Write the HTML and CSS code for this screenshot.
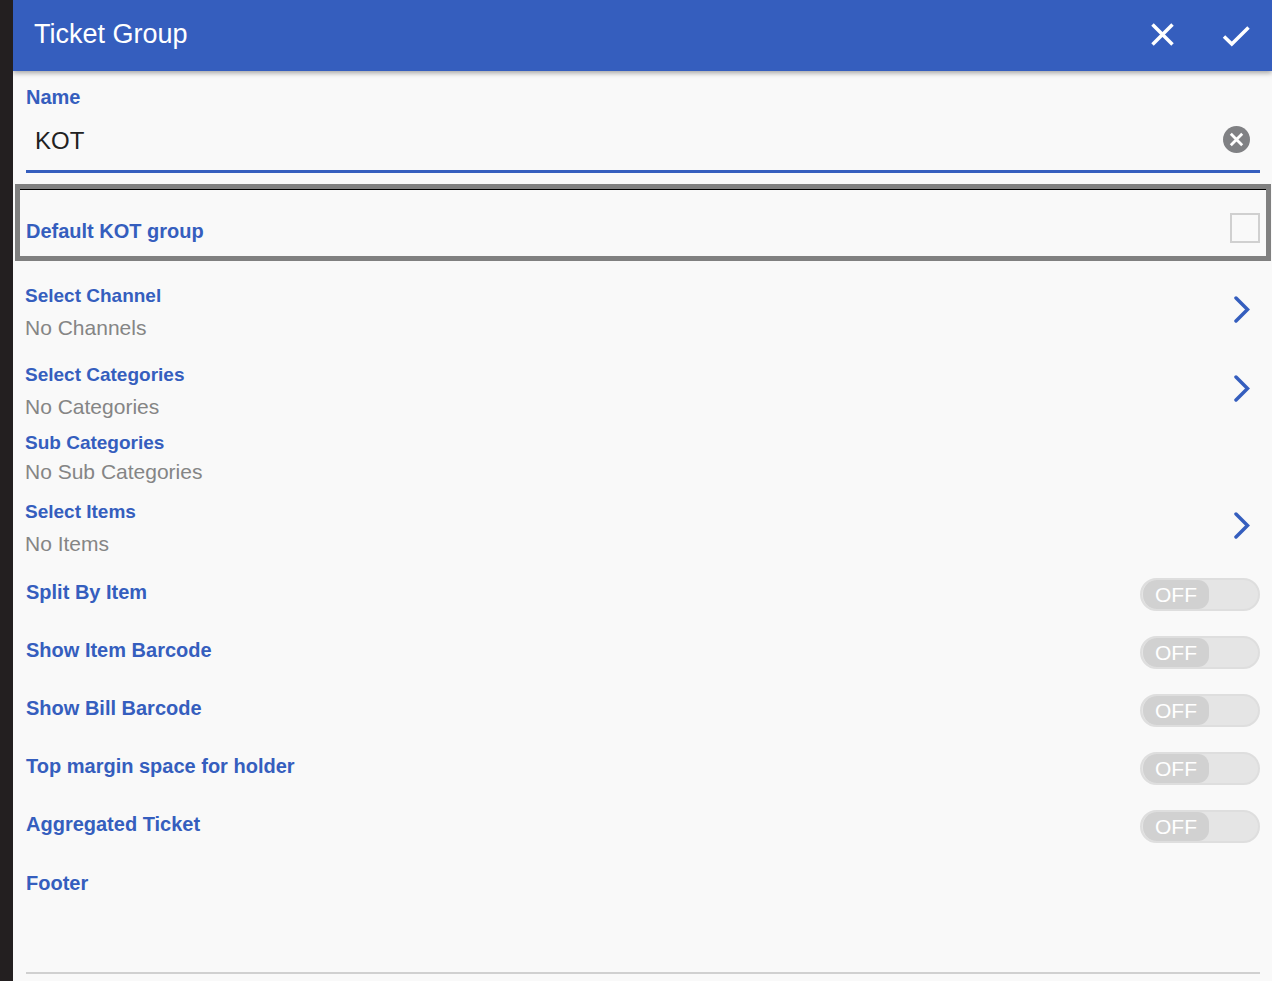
FILE: index.html
```html
<!DOCTYPE html>
<html lang="en">
<head>
    <meta charset="UTF-8">
    <meta name="viewport" content="width=device-width, initial-scale=1.0">
    <title>Ticket Group</title>
    <link rel="stylesheet" href="styles.css">
</head>
<body>

    <!-- Header -->
    <header class="header">
        <h1 class="title">Ticket Group</h1>
        <button class="icon-btn" type="button" aria-label="Close">
            <svg width="28" height="28" viewBox="0 0 28 28"><path d="M4.5 4.5L24.5 24.5M24.5 4.5L4.5 24.5" /></svg>
        </button>
        <button class="icon-btn" type="submit" form="ticket-form" aria-label="Save">
            <svg width="28" height="28" viewBox="0 0 28 28"><path d="M2 16.5L9.8 24L26.5 7.5" /></svg>
        </button>
    </header>

    <form id="ticket-form" class="form">
        <!-- Name -->
        <div class="field">
            <label class="label" for="name">Name</label>
            <div class="input-line">
                <input type="text" id="name" class="text-input" value="KOT">
                <button class="clear-btn" type="button" aria-label="Clear name">
                    <svg width="27" height="27" viewBox="0 0 27 27">
                        <circle cx="13.5" cy="13.5" r="13.5" />
                        <path d="M7.8 7.8L19.2 19.2M19.2 7.8L7.8 19.2" />
                    </svg>
                </button>
            </div>
        </div>

        <!-- Default group -->
        <div class="default-box">
            <label class="label" for="default-group">Default KOT group</label>
            <input type="checkbox" id="default-group" class="checkbox">
        </div>

        <!-- Pickers -->
        <div class="pickers">
            <button class="picker" type="button">
                <span class="picker-text">
                    <span class="picker-label">Select Channel</span>
                    <span class="picker-value">No Channels</span>
                </span>
                <svg class="chevron" width="16" height="27" viewBox="0 0 16 27"><path d="M2 2L13.5 13.5L2 25" /></svg>
            </button>
            <div class="category-group">
                <button class="picker" type="button">
                    <span class="picker-text">
                        <span class="picker-label">Select Categories</span>
                        <span class="picker-value">No Categories</span>
                    </span>
                    <svg class="chevron" width="16" height="27" viewBox="0 0 16 27"><path d="M2 2L13.5 13.5L2 25" /></svg>
                </button>
                <div class="picker-text sub-categories">
                    <span class="picker-label">Sub Categories</span>
                    <span class="picker-value">No Sub Categories</span>
                </div>
            </div>
            <button class="picker" type="button">
                <span class="picker-text">
                    <span class="picker-label">Select Items</span>
                    <span class="picker-value">No Items</span>
                </span>
                <svg class="chevron" width="16" height="27" viewBox="0 0 16 27"><path d="M2 2L13.5 13.5L2 25" /></svg>
            </button>
        </div>

        <!-- Switches -->
        <div class="switches">
            <div class="switch-row">
                <label class="label" for="split-item">Split By Item</label>
                <span class="switch"><input type="checkbox" id="split-item"><span class="thumb">OFF</span></span>
            </div>
            <div class="switch-row">
                <label class="label" for="item-barcode">Show Item Barcode</label>
                <span class="switch"><input type="checkbox" id="item-barcode"><span class="thumb">OFF</span></span>
            </div>
            <div class="switch-row">
                <label class="label" for="bill-barcode">Show Bill Barcode</label>
                <span class="switch"><input type="checkbox" id="bill-barcode"><span class="thumb">OFF</span></span>
            </div>
            <div class="switch-row">
                <label class="label" for="top-margin">Top margin space for holder</label>
                <span class="switch"><input type="checkbox" id="top-margin"><span class="thumb">OFF</span></span>
            </div>
            <div class="switch-row">
                <label class="label" for="aggregated">Aggregated Ticket</label>
                <span class="switch"><input type="checkbox" id="aggregated"><span class="thumb">OFF</span></span>
            </div>
        </div>

        <!-- Footer text -->
        <div class="footer-field">
            <label class="label" for="footer">Footer</label>
            <textarea id="footer" class="footer-input"></textarea>
        </div>
    </form>

    <script>
        // Clear the name field
        document.querySelector('.clear-btn').addEventListener('click', function () {
            const name = document.getElementById('name');
            name.value = '';
            name.focus();
        });

        // Keep the switch text in step with its state
        document.querySelectorAll('.switch input').forEach(function (input) {
            input.addEventListener('change', function () {
                input.nextElementSibling.innerText = input.checked ? 'ON' : 'OFF';
            });
        });
    </script>

</body>
</html>
```
FILE: styles.css
```css
* {
    box-sizing: border-box;
}

body {
    margin: 0;
    min-height: 100vh;
    border-left: 13px solid #231f20;
    background-color: #f9f9f9;
    font-family: "Liberation Sans", Arial, Helvetica, sans-serif;
    color: #222;
}

button, input, textarea {
    font-family: inherit;
    margin: 0;
}

button {
    padding: 0;
    border: none;
    background: none;
    cursor: pointer;
}

svg {
    display: block;
    fill: none;
}

/* Header */
.header {
    display: flex;
    align-items: center;
    gap: 46px;
    height: 71px;
    padding: 0 22px 3px 21px;
    background-color: #355ebe;
    box-shadow: 0 2px 5px rgba(0, 0, 0, 0.35);
    color: white;
}

.title {
    flex: 1;
    margin: 0;
    font-size: 27px;
    font-weight: normal;
    line-height: 32px;
}

.icon-btn svg {
    stroke: white;
    stroke-width: 3.5;
}

/* Name */
.form {
    padding: 14px 0 7px;
}

.field {
    padding: 0 12px 0 13px;
}

.label {
    display: block;
    font-size: 20px;
    font-weight: bold;
    line-height: 24px;
    color: #355ebe;
}

.input-line {
    display: flex;
    align-items: center;
    height: 64px;
    padding-right: 10px;
    border-bottom: 3px solid #355ebe;
}

.text-input {
    flex: 1;
    min-width: 0;
    height: 60px;
    padding: 2px 9px 0;
    border: none;
    outline: none;
    background: none;
    font-size: 24px;
    color: #222;
}

.clear-btn circle {
    fill: #808184;
}

.clear-btn path {
    stroke: white;
    stroke-width: 2.8;
}

/* Default group */
.default-box {
    display: flex;
    justify-content: space-between;
    align-items: flex-end;
    height: 77px;
    margin: 11px 1px 22px 2px;
    padding: 0 6px 13px;
    border: 5px solid #808080;
    box-shadow: inset 0 1px 0 #000;
}

.checkbox {
    appearance: none;
    width: 30px;
    height: 30px;
    border: 2px solid #d0d0d0;
    cursor: pointer;
}

.checkbox:checked {
    background-color: #355ebe;
}

/* Pickers */
.pickers {
    display: flex;
    flex-direction: column;
    gap: 22px;
    padding: 0 22px 0 12px;
}

.picker {
    display: flex;
    justify-content: space-between;
    align-items: flex-start;
    width: 100%;
    text-align: left;
}

.picker-text {
    display: flex;
    flex-direction: column;
    gap: 7px;
}

.picker-label {
    font-size: 19px;
    font-weight: bold;
    line-height: 26px;
    color: #355ebe;
}

.picker-value {
    font-size: 21px;
    line-height: 24px;
    color: #858585;
}

.category-group {
    display: flex;
    flex-direction: column;
    gap: 11px;
    margin-bottom: -7px;
}

.sub-categories {
    gap: 4px;
}

.chevron {
    margin-top: 13px;
    stroke: #355ebe;
    stroke-width: 3.5;
    stroke-linecap: round;
}

/* Switches */
.switches {
    display: flex;
    flex-direction: column;
    gap: 25px;
    padding: 22px 12px 26px 13px;
}

.switch-row {
    display: flex;
    justify-content: space-between;
    align-items: flex-start;
}

.switch-row .label,
.footer-field .label {
    line-height: 28px;
}

.switch {
    display: flex;
    position: relative;
    width: 120px;
    height: 33px;
    padding-left: 1px;
    border: 2px solid #dedede;
    border-radius: 17px;
    background-color: #e5e5e5;
}

.switch input {
    position: absolute;
    inset: 0;
    width: 100%;
    height: 100%;
    opacity: 0;
    cursor: pointer;
}

.thumb {
    width: 66px;
    border-radius: 14px 11px 11px 14px;
    background-color: #d1d1d1;
    font-size: 21px;
    line-height: 30px;
    text-align: center;
    color: white;
}

.switch input:checked + .thumb {
    margin-left: auto;
    background-color: #355ebe;
}

/* Footer text */
.footer-field {
    padding: 0 12px 0 13px;
}

.footer-input {
    display: block;
    width: 100%;
    height: 77px;
    padding: 9px;
    border: none;
    border-bottom: 2px solid #d0d0d0;
    outline: none;
    resize: none;
    background: none;
    font-size: 24px;
    color: #222;
}
```
